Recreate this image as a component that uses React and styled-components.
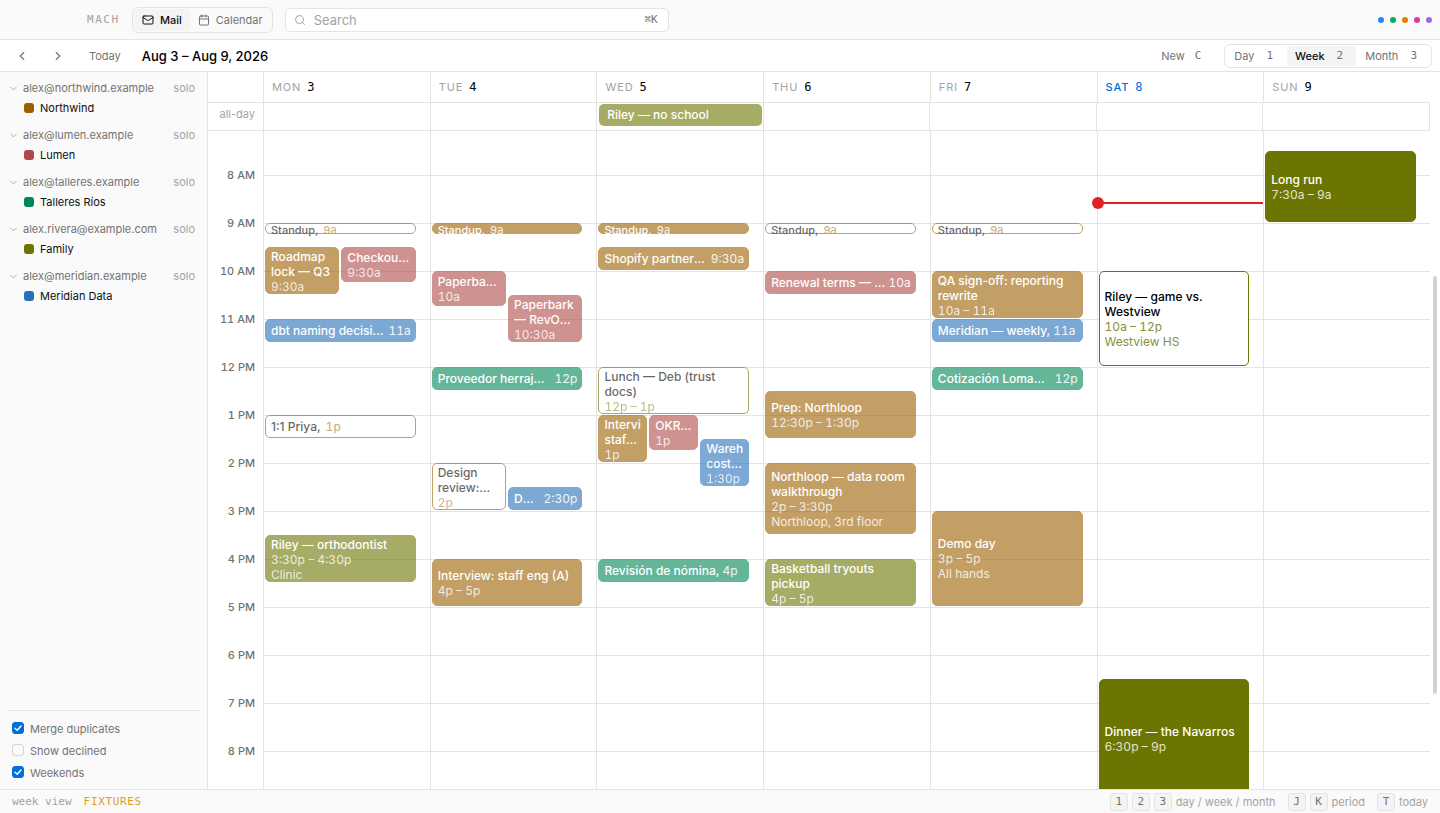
import React, { useLayoutEffect, useRef, useState } from 'react';
import styled, { createGlobalStyle, css } from 'styled-components';
import { Mail, Calendar, Search, ChevronLeft, ChevronRight, ChevronDown } from 'lucide-react';

const line = '#e4e4e4';
const panel = '#fafafa';
const hover = '#f4f4f4';
const ink = '#0f0f0f';
const grey = '#737373';
const lightGrey = '#a3a3a3';
const blue = '#006fdb';
const red = '#e22126';
const sans = "Inter, 'Liberation Sans', sans-serif";
const mono = "'DejaVu Sans Mono', 'Liberation Mono', monospace";

const hourHeight = 48;

const colors = {
    northwind: '#9c5f00',
    lumen: '#ae4b48',
    talleres: '#008757',
    family: '#6c7500',
    meridian: '#2670b9',
};

const accounts = [
    { email: 'alex@northwind.example', name: 'Northwind', color: colors.northwind },
    { email: 'alex@lumen.example', name: 'Lumen', color: colors.lumen },
    { email: 'alex@talleres.example', name: 'Talleres Ríos', color: colors.talleres },
    { email: 'alex.rivera@example.com', name: 'Family', color: colors.family },
    { email: 'alex@meridian.example', name: 'Meridian Data', color: colors.meridian },
];

const statusDots = ['#1e86ff', '#00b05c', '#dc8300', '#e93497', '#9b68e3'];

// start and end are hours; lane is [index, count] for overlapping events
const days = [
    {
        name: 'Mon', date: 3, past: true, events: [
            { title: 'Standup,', time: '9a', start: 9, end: 9.25, cal: 'northwind', outlined: true },
            { title: 'Roadmap lock — Q3', time: '9:30a', start: 9.5, end: 10.5, cal: 'northwind', lane: [0, 2] },
            { title: 'Checkout metrics', time: '9:30a', start: 9.5, end: 10.25, cal: 'lumen', lane: [1, 2] },
            { title: 'dbt naming decision,', time: '11a', start: 11, end: 11.5, cal: 'meridian' },
            { title: '1:1 Priya,', time: '1p', start: 13, end: 13.5, cal: 'northwind', outlined: true },
            { title: 'Riley — orthodontist', time: '3:30p – 4:30p', place: 'Clinic', start: 15.5, end: 16.5, cal: 'family' },
        ],
    },
    {
        name: 'Tue', date: 4, past: true, events: [
            { title: 'Standup,', time: '9a', start: 9, end: 9.25, cal: 'northwind' },
            { title: 'Paperbark sync', time: '10a', start: 10, end: 10.75, cal: 'lumen', lane: [0, 2] },
            { title: 'Paperbark — RevOps sync', time: '10:30a', start: 10.5, end: 11.5, cal: 'lumen', lane: [1, 2] },
            { title: 'Proveedor herrajes nuevos,', time: '12p', start: 12, end: 12.5, cal: 'talleres' },
            { title: 'Design review: reporting', time: '2p', start: 14, end: 15, cal: 'northwind', lane: [0, 2], outlined: true },
            { title: 'DW migration,', time: '2:30p', start: 14.5, end: 15, cal: 'meridian', lane: [1, 2] },
            { title: 'Interview: staff eng (A)', time: '4p – 5p', start: 16, end: 17, cal: 'northwind' },
        ],
    },
    {
        name: 'Wed', date: 5, past: true, allDay: 'Riley — no school', events: [
            { title: 'Standup,', time: '9a', start: 9, end: 9.25, cal: 'northwind' },
            { title: 'Shopify partnership,', time: '9:30a', start: 9.5, end: 10, cal: 'northwind' },
            { title: 'Lunch — Deb (trust docs)', time: '12p – 1p', start: 12, end: 13, cal: 'family', outlined: true },
            { title: 'Interview: staff eng (B)', time: '1p', start: 13, end: 14, cal: 'northwind', lane: [0, 3] },
            { title: 'OKR review', time: '1p', start: 13, end: 13.75, cal: 'lumen', lane: [1, 3] },
            { title: 'Warehouse cost review', time: '1:30p', start: 13.5, end: 14.5, cal: 'meridian', lane: [2, 3] },
            { title: 'Revisión de nómina,', time: '4p', start: 16, end: 16.5, cal: 'talleres' },
        ],
    },
    {
        name: 'Thu', date: 6, past: true, events: [
            { title: 'Standup,', time: '9a', start: 9, end: 9.25, cal: 'northwind', outlined: true },
            { title: 'Renewal terms — Paperbark,', time: '10a', start: 10, end: 10.5, cal: 'lumen' },
            { title: 'Prep: Northloop', time: '12:30p – 1:30p', start: 12.5, end: 13.5, cal: 'northwind' },
            { title: 'Northloop — data room walkthrough', time: '2p – 3:30p', place: 'Northloop, 3rd floor', start: 14, end: 15.5, cal: 'northwind' },
            { title: 'Basketball tryouts pickup', time: '4p – 5p', start: 16, end: 17, cal: 'family' },
        ],
    },
    {
        name: 'Fri', date: 7, past: true, events: [
            { title: 'Standup,', time: '9a', start: 9, end: 9.25, cal: 'northwind', outlined: true },
            { title: 'QA sign-off: reporting rewrite', time: '10a – 11a', start: 10, end: 11, cal: 'northwind' },
            { title: 'Meridian — weekly,', time: '11a', start: 11, end: 11.5, cal: 'meridian' },
            { title: 'Cotización Lomabonita,', time: '12p', start: 12, end: 12.5, cal: 'talleres' },
            { title: 'Demo day', time: '3p – 5p', place: 'All hands', start: 15, end: 17, cal: 'northwind' },
        ],
    },
    {
        name: 'Sat', date: 8, today: true, now: 8 + 35 / 60, events: [
            { title: 'Riley — game vs. Westview', time: '10a – 12p', place: 'Westview HS', start: 10, end: 12, cal: 'family', outlined: true },
            { title: 'Dinner — the Navarros', time: '6:30p – 9p', start: 18.5, end: 21, cal: 'family' },
        ],
    },
    {
        name: 'Sun', date: 9, events: [
            { title: 'Long run', time: '7:30a – 9a', start: 7.5, end: 9, cal: 'family' },
        ],
    },
];

const hours = Array.from({ length: 24 }, (_, h) => (h === 0 ? '' : `${h % 12 || 12} ${h < 12 ? 'AM' : 'PM'}`));

function EventBlock({ event, past }) {
    const [index, count] = event.lane || [0, 1];
    const length = event.end - event.start;
    return (
        <Event
            $start={event.start * 4 + 1}
            $span={length * 4}
            $lane={(index * 6) / count + 1}
            $lanes={6 / count}
            $color={colors[event.cal]}
            $outlined={event.outlined}
            $past={past}
            $tall={length > 1}
            $inline={length <= 0.5}
            $tiny={length <= 0.25}
        >
            <EventTitle $lines={length < 1 ? 1 : 2}>{event.title}</EventTitle>
            <EventMeta>{event.time}</EventMeta>
            {event.place && <EventMeta>{event.place}</EventMeta>}
        </Event>
    );
}

function Sidebar() {
    const [options, setOptions] = useState({ merge: true, declined: false, weekends: true });
    const labels = { merge: 'Merge duplicates', declined: 'Show declined', weekends: 'Weekends' };
    return (
        <Aside>
            <div>
                {accounts.map((account) => (
                    <Account key={account.email}>
                        <AccountHeader>
                            <ChevronDown size={11} strokeWidth={2} />
                            <Email>{account.email}</Email>
                            <Solo>solo</Solo>
                        </AccountHeader>
                        <CalendarRow>
                            <Swatch $color={account.color} />
                            {account.name}
                        </CalendarRow>
                    </Account>
                ))}
            </div>
            <Options>
                {Object.keys(labels).map((key) => (
                    <Option key={key}>
                        <Checkbox
                            type="checkbox"
                            checked={options[key]}
                            onChange={() => setOptions({ ...options, [key]: !options[key] })}
                        />
                        {labels[key]}
                    </Option>
                ))}
            </Options>
        </Aside>
    );
}

function Week() {
    const scroller = useRef(null);

    // open just after 7 AM
    useLayoutEffect(() => {
        scroller.current.scrollTop = 7 * hourHeight + 4;
    }, []);

    return (
        <WeekArea>
            <WeekMain>
                <DayHeader>
                    <span />
                    {days.map((day) => (
                        <DayName key={day.name} $today={day.today}>
                            {day.name}
                            <DayNumber $today={day.today}>{day.date}</DayNumber>
                        </DayName>
                    ))}
                </DayHeader>
                <AllDay>
                    <AllDayLabel>all-day</AllDayLabel>
                    {days.map((day) => (
                        <AllDayCell key={day.name}>
                            {day.allDay && <AllDayChip $color={colors.family}>{day.allDay}</AllDayChip>}
                        </AllDayCell>
                    ))}
                </AllDay>
                <Scroller ref={scroller}>
                    <Hours>
                        {hours.map((hour, i) => <Hour key={i}>{hour}</Hour>)}
                    </Hours>
                    {days.map((day) => (
                        <DayColumn key={day.name}>
                            {day.events.map((event) => (
                                <EventBlock key={event.title + event.start} event={event} past={day.past} />
                            ))}
                            {day.now && <NowLine style={{ top: Math.round(day.now * hourHeight) - 1 }} />}
                        </DayColumn>
                    ))}
                </Scroller>
            </WeekMain>
            <Rail><Thumb /></Rail>
        </WeekArea>
    );
}

function App() {
    return (
        <Page>
            <GlobalStyle />
            <TopBar>
                <Brand>MACH</Brand>
                <Switcher>
                    <SwitchButton $active><Mail size={12} />Mail</SwitchButton>
                    <SwitchButton><Calendar size={12} />Calendar</SwitchButton>
                </Switcher>
                <SearchBox>
                    <Search size={12} />
                    <SearchInput placeholder="Search" aria-label="Search" />
                    <Shortcut>⌘K</Shortcut>
                </SearchBox>
                <Dots>
                    {statusDots.map((color) => <Dot key={color} $color={color} />)}
                </Dots>
            </TopBar>
            <Toolbar>
                <ArrowButton aria-label="Previous week"><ChevronLeft size={14} /></ArrowButton>
                <ArrowButton aria-label="Next week"><ChevronRight size={14} /></ArrowButton>
                <PlainButton>Today</PlainButton>
                <Range>Aug 3 – Aug 9, 2026</Range>
                <NewButton>New<Key>C</Key></NewButton>
                <ViewSwitcher>
                    <ViewButton>Day<Key>1</Key></ViewButton>
                    <ViewButton $active>Week<Key>2</Key></ViewButton>
                    <ViewButton>Month<Key>3</Key></ViewButton>
                </ViewSwitcher>
            </Toolbar>
            <Content>
                <Sidebar />
                <Week />
            </Content>
            <StatusBar>
                <Mode>week view</Mode>
                <Fixtures>FIXTURES</Fixtures>
                <Hints>
                    <Hint><Kbd>1</Kbd><Kbd>2</Kbd><Kbd>3</Kbd>day / week / month</Hint>
                    <Hint><Kbd>J</Kbd><Kbd>K</Kbd>period</Hint>
                    <Hint><Kbd>T</Kbd>today</Hint>
                </Hints>
            </StatusBar>
        </Page>
    );
}

export default App;

const GlobalStyle = createGlobalStyle`
    *, *::before, *::after {
        box-sizing: border-box;
    }

    body {
        margin: 0;
        font-family: ${sans};
        font-size: 11px;
        line-height: 16px;
        color: ${ink};
        background: #fff;
    }

    button, input {
        font: inherit;
        color: inherit;
    }

    button {
        border: 0;
        padding: 0;
        background: none;
    }
`;

const Page = styled.div`
    display: flex;
    flex-direction: column;
    height: 100vh;
`;

const TopBar = styled.header`
    display: flex;
    align-items: center;
    height: 40px;
    padding: 0 8px 0 87px;
    background: ${panel};
    border-bottom: 1px solid ${line};
`;

const Brand = styled.div`
    width: 45px;
    font-family: ${mono};
    letter-spacing: 0.14em;
    color: ${lightGrey};
`;

const Switcher = styled.nav`
    display: flex;
    height: 26px;
    padding: 1px;
    border: 1px solid ${line};
    border-radius: 6px;
`;

const SwitchButton = styled.button`
    display: flex;
    align-items: center;
    gap: 6px;
    padding: 0 8px;
    border-radius: 4px;
    color: ${(props) => (props.$active ? ink : grey)};
    background: ${(props) => (props.$active ? hover : 'none')};
    font-weight: ${(props) => (props.$active ? 500 : 400)};
`;

const SearchBox = styled.label`
    display: flex;
    align-items: center;
    gap: 8px;
    width: 384px;
    height: 24px;
    margin-left: 12px;
    padding: 0 10px 0 8px;
    border: 1px solid ${line};
    border-radius: 5px;
    background: #fff;
    color: ${lightGrey};
`;

const SearchInput = styled.input`
    flex: 1;
    min-width: 0;
    border: 0;
    padding: 0;
    outline: 0;
    background: none;
    font-size: 13px;

    &::placeholder {
        color: ${lightGrey};
    }
`;

const Shortcut = styled.span`
    font-family: ${mono};
    color: ${grey};
`;

const Dots = styled.div`
    display: flex;
    gap: 6px;
    margin-left: auto;
`;

const Dot = styled.span`
    width: 6px;
    height: 6px;
    border-radius: 50%;
    background: ${(props) => props.$color};
`;

const Toolbar = styled.div`
    display: flex;
    align-items: center;
    height: 32px;
    padding: 0 8px;
    border-bottom: 1px solid ${line};
    color: ${grey};
`;

const ArrowButton = styled.button`
    display: grid;
    place-items: center;
    width: 28px;
    height: 24px;
    margin-right: 8px;
`;

const PlainButton = styled.button`
    height: 24px;
    padding: 0 9px;
`;

const Range = styled.h1`
    margin: 0 0 0 12px;
    font-size: 13px;
    font-weight: 500;
    color: #000;
`;

const NewButton = styled.button`
    display: flex;
    align-items: center;
    gap: 10px;
    margin-left: auto;
    margin-right: 23px;
`;

const Key = styled.span`
    font-family: ${mono};
    font-weight: 400;
    color: ${grey};
`;

const ViewSwitcher = styled.div`
    display: flex;
    gap: 1px;
    height: 24px;
    padding: 1px;
    border: 1px solid ${line};
    border-radius: 6px;
`;

const ViewButton = styled.button`
    display: flex;
    align-items: center;
    gap: 12px;
    padding: 0 13px 0 8px;
    border-radius: 4px;
    color: ${(props) => (props.$active ? ink : grey)};
    background: ${(props) => (props.$active ? hover : 'none')};
    font-weight: ${(props) => (props.$active ? 500 : 400)};
`;

const Content = styled.div`
    display: flex;
    flex: 1;
    min-height: 0;
`;

const Aside = styled.aside`
    display: flex;
    flex-direction: column;
    justify-content: space-between;
    width: 208px;
    padding: 8px 8px 0;
    background: ${panel};
    border-right: 1px solid ${line};
`;

const Account = styled.section`
    margin-bottom: 7px;
`;

const AccountHeader = styled.div`
    display: flex;
    align-items: center;
    height: 16px;
    padding-right: 4px;
    color: ${lightGrey};
`;

const Email = styled.span`
    margin-left: 4px;
    color: ${grey};
`;

const Solo = styled.span`
    margin-left: auto;
`;

const CalendarRow = styled.div`
    display: flex;
    align-items: center;
    gap: 6px;
    height: 24px;
    padding-left: 16px;
`;

const Swatch = styled.span`
    width: 10px;
    height: 10px;
    border-radius: 3px;
    background: ${(props) => props.$color};
`;

const Options = styled.div`
    padding: 7px 4px 5px;
    border-top: 1px solid ${line};
`;

const Option = styled.label`
    display: flex;
    align-items: center;
    gap: 6px;
    height: 22px;
    color: ${grey};
`;

const Checkbox = styled.input`
    appearance: none;
    width: 12px;
    height: 12px;
    margin: 0 0 2px;
    border: 1px solid #d4d4d4;
    border-radius: 3px;

    &:checked {
        border-color: ${blue};
        background: ${blue} url("data:image/svg+xml,%3Csvg xmlns='http://www.w3.org/2000/svg' viewBox='0 0 10 10' fill='none' stroke='white' stroke-width='1.4' stroke-linecap='round' stroke-linejoin='round'%3E%3Cpath d='M2 5.2 4.2 7.2 8 3'/%3E%3C/svg%3E") center / 10px no-repeat;
    }
`;

const WeekArea = styled.main`
    display: flex;
    flex: 1;
    min-width: 0;
`;

const WeekMain = styled.div`
    display: flex;
    flex-direction: column;
    flex: 1;
    min-width: 0;
`;

const DayHeader = styled.div`
    display: grid;
    grid-template-columns: 55px repeat(7, minmax(0, 1fr));
    height: 31px;
    border-bottom: 1px solid ${line};
`;

const DayName = styled.div`
    display: flex;
    align-items: center;
    gap: 6px;
    padding-left: 8px;
    border-left: 1px solid ${line};
    font-weight: ${(props) => (props.$today ? 500 : 400)};
    letter-spacing: 0.08em;
    text-transform: uppercase;
    color: ${(props) => (props.$today ? blue : lightGrey)};
`;

const DayNumber = styled.span`
    font-family: ${mono};
    font-size: 12px;
    letter-spacing: 0;
    color: ${(props) => (props.$today ? blue : '#000')};
`;

const AllDay = styled.div`
    display: grid;
    grid-template-columns: 56px repeat(7, minmax(0, 1fr));
    height: 28px;
    border-bottom: 1px solid ${line};
`;

const AllDayLabel = styled.div`
    padding: 3px 8px 0 0;
    border-right: 1px solid ${line};
    text-align: right;
    color: ${lightGrey};
`;

const AllDayCell = styled.div`
    padding: 1px 1px 0 2px;
    border-right: 1px solid ${line};
`;

const AllDayChip = styled.div`
    height: 22px;
    padding: 0 8px;
    border-radius: 5px;
    line-height: 22px;
    font-size: 12px;
    font-weight: 500;
    color: #fff;
    background: ${(props) => props.$color};
    opacity: 0.6;
`;

const Scroller = styled.div`
    display: grid;
    grid-template-columns: 55px repeat(7, minmax(0, 1fr));
    flex: 1;
    min-height: 0;
    overflow-y: scroll;
    scrollbar-width: none;
`;

const Hours = styled.div`
    height: ${24 * hourHeight}px;
    margin-top: -24px;
`;

const Hour = styled.div`
    height: ${hourHeight}px;
    padding-right: 8px;
    line-height: ${hourHeight}px;
    font-weight: 500;
    font-variant-numeric: tabular-nums;
    text-align: right;
    color: ${grey};
`;

const DayColumn = styled.div`
    position: relative;
    display: grid;
    grid-template-rows: repeat(96, ${hourHeight / 4}px);
    grid-template-columns: repeat(6, minmax(0, 1fr));
    column-gap: 2px;
    height: ${24 * hourHeight}px;
    padding: 0 14px 0 1px;
    border-left: 1px solid ${line};
    background: linear-gradient(${line} 1px, transparent 1px) 0 0 / 100% ${hourHeight}px;
`;

const EventTitle = styled.div`
    display: -webkit-box;
    -webkit-box-orient: vertical;
    -webkit-line-clamp: ${(props) => props.$lines};
    flex-shrink: 0;
    overflow: hidden;
    font-weight: 500;
    word-break: ${(props) => (props.$lines === 1 ? 'break-all' : 'normal')};
`;

const EventMeta = styled.div`
    flex-shrink: 0;
    overflow: hidden;
    white-space: nowrap;
    font-variant-numeric: tabular-nums;
    opacity: 0.8;
`;

const Event = styled.article`
    display: flex;
    flex-direction: column;
    justify-content: safe center;
    grid-row: ${(props) => props.$start} / span ${(props) => props.$span};
    grid-column: ${(props) => props.$lane} / span ${(props) => props.$lanes};
    min-width: 0;
    margin-bottom: 1px;
    padding: ${(props) => (props.$tall ? 0 : 1)}px 5px 0;
    border: 1px solid ${(props) => props.$color};
    border-radius: 5px;
    font-size: 12px;
    line-height: 15px;
    color: #fff;
    background: ${(props) => props.$color};
    opacity: ${(props) => (props.$past ? 0.6 : 1)};

    ${(props) => props.$outlined && css`
        color: #000;
        background: #fff;

        ${EventMeta} {
            color: ${props.$color};
        }
    `}

    ${(props) => props.$inline && css`
        flex-direction: row;
        align-items: center;
        justify-content: flex-start;
        gap: ${props.$tiny || props.$outlined ? 5 : 3}px;
        padding: 0 4px 0 5px;

        ${EventTitle} {
            flex-shrink: 1;
            display: block;
            text-overflow: ellipsis;
            white-space: nowrap;
        }

        ${EventMeta} {
            opacity: 0.9;
        }
    `}

    ${(props) => props.$tiny && css`
        align-items: flex-start;
        font-size: 11px;
        line-height: 13px;
    `}
`;

const NowLine = styled.div`
    position: absolute;
    left: 0;
    right: 0;
    height: 2px;
    background: ${red};

    &::before {
        content: '';
        position: absolute;
        left: -6px;
        top: -5px;
        width: 12px;
        height: 12px;
        border-radius: 50%;
        background: ${red};
    }
`;

const Rail = styled.div`
    display: grid;
    grid-template-rows: 204fr 418fr 95fr;
    width: 10px;
    padding: 0 3px;
`;

const Thumb = styled.div`
    grid-row: 2;
    border-radius: 2px;
    background: #d2d2d2;
`;

const StatusBar = styled.footer`
    display: flex;
    align-items: center;
    height: 24px;
    padding: 0 12px;
    border-top: 1px solid ${line};
    background: ${panel};
    color: ${lightGrey};
`;

const Mode = styled.span`
    font-family: ${mono};
`;

const Fixtures = styled.span`
    margin-left: 12px;
    font-family: ${mono};
    letter-spacing: 0.06em;
    color: #e09b1a;
`;

const Hints = styled.div`
    display: flex;
    gap: 12px;
    margin-left: auto;
`;

const Hint = styled.span`
    display: flex;
    align-items: center;
    gap: 4px;
`;

const Kbd = styled.kbd`
    display: grid;
    place-items: center;
    width: 18px;
    height: 18px;
    border: 1px solid ${line};
    border-radius: 3px;
    background: ${hover};
    font-family: ${mono};
    font-size: 11px;
    color: ${grey};
`;
